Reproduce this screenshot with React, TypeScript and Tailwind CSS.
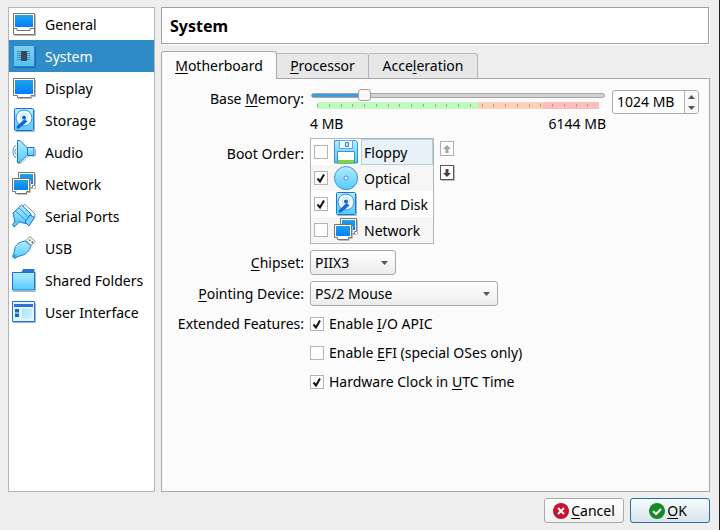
import { useState, type ReactNode } from "react";

const ICON = "block h-6 w-6 shrink-0 overflow-visible";

function Defs() {
  return (
    <svg className="absolute h-0 w-0" aria-hidden="true">
      <defs>
        <linearGradient id="screen" x1="0" y1="0" x2="0" y2="1">
          <stop offset="0" stopColor="#1ea4e0" />
          <stop offset="1" stopColor="#057cff" />
        </linearGradient>
        <linearGradient id="sky" x1="0" y1="0" x2="0" y2="1">
          <stop offset="0" stopColor="#b4ecff" />
          <stop offset="1" stopColor="#52ccfb" />
        </linearGradient>
        <linearGradient id="chip" x1="0" y1="0" x2="0" y2="1">
          <stop offset="0" stopColor="#84cfe8" />
          <stop offset="1" stopColor="#4fc1f2" />
        </linearGradient>
        <linearGradient id="pale" x1="0" y1="0" x2="1" y2="1">
          <stop offset="0" stopColor="#a4e2fb" />
          <stop offset="1" stopColor="#d9f5ff" />
        </linearGradient>
      </defs>
    </svg>
  );
}

function GeneralIcon() {
  return (
    <svg className={ICON} viewBox="0 0 24 24" fill="none">
      <path d="M2.500 23.500h21v-21" stroke="#bbb" />
      <path d="M1.500 1.500h21v21h-21z" fill="#fff" stroke="#757575" />
      <path d="M3 3h18v12H3z" fill="url(#screen)" />
      <path d="M2 16.500h3v2h13v-2h4" stroke="#757575" />
    </svg>
  );
}

function SystemIcon() {
  return (
    <svg className={ICON} viewBox="0 0 24 24" fill="none">
      <path d="M2 23.500h21.500V3" stroke="#1b66ad" />
      <path d="M1.500 1.500h21v21h-21z" fill="url(#chip)" stroke="#2584d8" />
      <path d="M5 7.500h13M5 9.500h13M5 11.500h13M5 13.500h13M5 15.500h13" stroke="#4a8db5" />
      <path d="M9 7h6v10H9z" fill="#334b60" />
    </svg>
  );
}

function DisplayIcon() {
  return (
    <svg className={ICON} viewBox="0 0 24 24" fill="none">
      <path d="M6 22.500h14v-2h3.500V4" stroke="#bbb" />
      <path d="M1.500 2.500h21v17h-3.500v2H5.500v-2h-4z" fill="#fff" stroke="#757575" />
      <path d="M3 4h18v14H3z" fill="url(#screen)" />
    </svg>
  );
}

function DiskIcon() {
  return (
    <svg className={ICON} viewBox="0 0 24 24" fill="none">
      <path d="M3.500 23.500h19V2" stroke="#a8b4bf" />
      <rect x="2.500" y=".5" width="19" height="22" rx="1" fill="url(#sky)" stroke="#1b74d6" />
      <circle cx="12" cy="10" r="8" fill="#f2fbff" stroke="#3a90e4" />
      <circle cx="12" cy="9" r="3.500" fill="#fff" stroke="#a8dcf8" />
      <path d="M12.500 11l3 2.500L7 20.500c-1.500 1-3.500-1-2-2.500z" fill="#1769d2" />
      <circle cx="12" cy="9.500" r="2" fill="#155fc4" />
    </svg>
  );
}

function AudioIcon() {
  return (
    <svg className={ICON} viewBox="0 0 24 24" fill="none">
      <path d="M6 23.500h3l8-7.500h6.500V9" stroke="#bbb" />
      <path d="M5.500.5h2.500L15.500 8v7L8 22.500H5.500z" fill="url(#sky)" stroke="#1b74d6" />
      <path d="M15.500 7.500h6.500v8h-6.500z" fill="url(#sky)" stroke="#1b74d6" />
      <path d="M4 5.500C0 6 0 17 4 17.500M4.500 8.500c-2 1-2 5 0 6" stroke="#3a90e4" />
    </svg>
  );
}

function NetworkIcon() {
  return (
    <svg className={ICON} viewBox="0 0 24 24" fill="none">
      <path d="M19 16.500h4.500V2" stroke="#bbb" />
      <path d="M6.500.5h16v13h-2v2h-10v-2h-4z" fill="#fff" stroke="#757575" />
      <path d="M8 2h13v10H8z" fill="url(#screen)" />
      <path d="M5 22.500h10v-2h3.500V8" stroke="#bbb" />
      <path d="M.5 6.500h17v13h-3v2h-11v-2h-3z" fill="#fff" stroke="#757575" />
      <path d="M2 8h14v10H2z" fill="url(#screen)" />
    </svg>
  );
}

function SerialIcon() {
  return (
    <svg className={ICON} viewBox="0 0 24 24" fill="none">
      <path d="M10.500 2l2.500-1.500L23 10l-.5 4-3 2z" fill="#fff" stroke="#858585" />
      <path d="M1 9L9.500 1l9.500 9v4l-4 5.500-4-.5L9 18l-6 .5z" fill="url(#sky)" stroke="#1b74d6" />
      <path d="M3.500 7l11 10M7 4l10.500 10" stroke="#3a90e4" />
      <path d="M13 18l5-7 4.500 2.500L17 22z" fill="#72d5fc" stroke="#1b74d6" />
      <path d="M3.500 17L.5 20.500 2 23l4.500-4" fill="#57cfff" stroke="#1b74d6" />
    </svg>
  );
}

function UsbIcon() {
  return (
    <svg className={ICON} viewBox="0 0 24 24" fill="none">
      <path d="M14 4.500L18 .5l5 5-4 4z" fill="#fff" stroke="#858585" />
      <path d="M17 3.500h1.500V5H17zM19.500 5.500H21V7h-1.500z" fill="#444" />
      <path
        d="M13 5c-6 1-10 4-10.500 9 0 2-.5 3-2 6.500L2.500 22.500c3-1.500 4-2.500 7-3 5-1 8-5 9.500-10z"
        fill="url(#sky)"
        stroke="#2479d4"
      />
      <path d="M2.500 18L.5 21l1.500 1.500L5 20.500z" fill="#28a4f2" />
    </svg>
  );
}

function FolderIcon() {
  return (
    <svg className={ICON} viewBox="0 0 24 24" fill="none">
      <path d="M1 23.500h22.500V4" stroke="#a8b4bf" />
      <path d="M9 5l2-4h11.500v4z" fill="#3272d0" />
      <path d="M.5 4.500h22v17.500H.5z" fill="url(#sky)" stroke="#1b74d6" />
    </svg>
  );
}

function InterfaceIcon() {
  return (
    <svg className={ICON} viewBox="0 0 24 24" fill="none">
      <path d="M1 22.500h22.500V3" stroke="#a8b4bf" />
      <path d="M.5 1.500h22v20H.5z" fill="#dff6ff" stroke="#1b74d6" />
      <path d="M2 4h19v3H2z" fill="#3272d0" />
      <path d="M3 9h4v3.500H3zM3 13.500h4V17H3z" fill="#1566cc" />
      <path d="M10 9h10v10H10z" fill="url(#pale)" />
    </svg>
  );
}

function FloppyIcon() {
  return (
    <svg className={ICON} viewBox="0 0 24 24" fill="none">
      <path d="M.5.5h21l2 2v20.500H.5z" fill="url(#sky)" stroke="#3a8ee0" />
      <path d="M5.500.5h13v8h-13z" fill="#f2fbff" stroke="#5aa7ea" />
      <path d="M11.500 2.500h3v4h-3z" fill="#b9e8fb" stroke="#2f86dc" />
      <path d="M3.500 11.500h17V23h-17z" fill="#fff" stroke="#3a8ee0" />
      <path d="M4 20h16v3H4z" fill="#7fd62d" />
    </svg>
  );
}

function OpticalIcon() {
  return (
    <svg className={ICON} viewBox="0 0 24 24" fill="none">
      <circle cx="12.500" cy="12.500" r="11.500" fill="#bbc4cc" />
      <circle cx="12" cy="12" r="11.500" fill="url(#sky)" stroke="#4795dd" />
      <circle cx="12" cy="12" r="2" fill="#fff" stroke="#3f8fdc" />
    </svg>
  );
}

function Caret({ up = false }: { up?: boolean }) {
  return (
    <svg className="block h-1 w-[7px]" viewBox="0 0 7 4">
      <path d={up ? "M0 4L3.500 0 7 4z" : "M0 0h7L3.500 4z"} fill="#555" />
    </svg>
  );
}

function Key({ children }: { children: ReactNode }) {
  return (
    <span className="underline decoration-1 underline-offset-2 [text-decoration-skip-ink:none]">{children}</span>
  );
}

function Tick({ id, on }: { id: string; on: boolean }) {
  return (
    <span className="grid h-3.5 w-3.5 shrink-0">
      <input
        id={id}
        type="checkbox"
        defaultChecked={on}
        className="peer col-start-1 row-start-1 h-3.5 w-3.5 appearance-none border border-[#b4b4b4] bg-white"
      />
      <svg
        className="pointer-events-none invisible col-start-1 row-start-1 h-3.5 w-3.5 peer-checked:visible"
        viewBox="0 0 14 14"
        fill="none"
      >
        <path d="M3.500 7.500l2.500 3L10 3.500" stroke="#111" strokeWidth="2" />
      </svg>
    </span>
  );
}

function Combo({ id, options, width }: { id: string; options: string[]; width: string }) {
  return (
    <span className={`grid items-center ${width}`}>
      <select
        id={id}
        className="col-start-1 row-start-1 h-[25px] w-full appearance-none rounded-[3px] border border-[#a9a9a9] bg-linear-to-b from-white to-[#ececec] pr-6 pl-1 leading-5"
      >
        {options.map((o) => (
          <option key={o}>{o}</option>
        ))}
      </select>
      <span className="pointer-events-none col-start-1 row-start-1 mr-2 justify-self-end">
        <Caret />
      </span>
    </span>
  );
}

const categories = [
  { name: "General", icon: <GeneralIcon /> },
  { name: "System", icon: <SystemIcon /> },
  { name: "Display", icon: <DisplayIcon /> },
  { name: "Storage", icon: <DiskIcon /> },
  { name: "Audio", icon: <AudioIcon /> },
  { name: "Network", icon: <NetworkIcon /> },
  { name: "Serial Ports", icon: <SerialIcon /> },
  { name: "USB", icon: <UsbIcon /> },
  { name: "Shared Folders", icon: <FolderIcon /> },
  { name: "User Interface", icon: <InterfaceIcon /> },
];

const bootDevices = [
  { name: "Floppy", icon: <FloppyIcon />, on: false },
  { name: "Optical", icon: <OpticalIcon />, on: true },
  { name: "Hard Disk", icon: <DiskIcon />, on: true },
  { name: "Network", icon: <NetworkIcon />, on: false },
];

const MIN = 4;
const MAX = 6144;

function MemoryRow() {
  const [memory, setMemory] = useState(1024);
  const fill = ((memory - MIN) / (MAX - MIN)) * 100;
  const step = (by: number) => setMemory((m) => Math.min(MAX, Math.max(MIN, m + by)));
  return (
    <div className="flex items-start gap-1.5">
      <div className="min-w-0 flex-1">
        <div className="mx-px grid h-3 items-center">
          <div className="col-start-1 row-start-1 h-[5px] overflow-hidden rounded-sm border border-[#a5a5a5] bg-[#d2d2d2]">
            <div className="h-full bg-[#3d9be0] shadow-[0_0_0_1px_#2b6f9f]" style={{ width: `${fill}%` }} />
          </div>
          <input
            id="memory"
            type="range"
            min={MIN}
            max={MAX}
            value={memory}
            onChange={(e) => setMemory(Number(e.target.value))}
            className="col-start-1 row-start-1 h-3 w-full appearance-none bg-transparent [&::-webkit-slider-thumb]:h-3 [&::-webkit-slider-thumb]:w-[13px] [&::-webkit-slider-thumb]:appearance-none [&::-webkit-slider-thumb]:rounded-[3px] [&::-webkit-slider-thumb]:border [&::-webkit-slider-thumb]:border-[#a0a0a0] [&::-webkit-slider-thumb]:bg-[#f8f8f8]"
          />
        </div>
        <div className="mx-[7px] mt-px flex h-[7px] items-center bg-[linear-gradient(90deg,#c0fbbd_57%,#fdd0b8_57%,#fdd0b8_80%,#fcbdbd_80%)]">
          {Array.from({ length: 24 }, (_, i) => (
            <span key={i} className="h-[3px] flex-1 border-l border-[#a3a3a3]" />
          ))}
        </div>
        <div className="mt-1.5 flex justify-between leading-[17px]">
          <span>4 MB</span>
          <span>6144 MB</span>
        </div>
      </div>
      <div className="mt-px flex h-6 w-[87px] overflow-hidden rounded-[3px] border border-[#a9a9a9] bg-white">
        <input
          aria-label="Base memory size"
          value={`${memory} MB`}
          onChange={(e) => setMemory(parseInt(e.target.value, 10) || MIN)}
          className="w-0 min-w-0 flex-1 pl-1 outline-none"
        />
        <div className="flex w-[14px] flex-col border-l border-[#b4b4b4] bg-[#f8f8f8]">
          <button aria-label="More memory" onClick={() => step(4)} className="grid flex-1 place-items-center">
            <Caret up />
          </button>
          <button aria-label="Less memory" onClick={() => step(-4)} className="grid flex-1 place-items-center">
            <Caret />
          </button>
        </div>
      </div>
    </div>
  );
}

function ArrowButton({ up = false }: { up?: boolean }) {
  return (
    <button
      aria-label={up ? "Move up" : "Move down"}
      disabled={up}
      className="grid h-[15px] w-3.5 place-items-center border border-[#555] bg-white shadow-[1px_1px_0_#bbb] disabled:border-[#b0b0b0] disabled:shadow-none"
    >
      <svg className="block h-2 w-2" viewBox="0 0 8 8">
        <path
          d={up ? "M4 0L8 4H5.500v4h-3V4H0z" : "M4 8L0 4h2.500V0h3v4H8z"}
          fill={up ? "#a3a3a3" : "#4a3f3f"}
        />
      </svg>
    </button>
  );
}

function BootOrder() {
  return (
    <div className="flex items-start gap-1.5">
      <ul aria-labelledby="boot-label" className="w-[124px] border border-[#b4b4b4] bg-white">
        {bootDevices.map((d, i) => (
          <li key={d.name} className="flex h-[26px] items-center pl-[3px] even:bg-[#f6f6f6]">
            <Tick id={`boot-${i}`} on={d.on} />
            <label htmlFor={`boot-${i}`} className="ml-1.5 flex flex-1 items-center gap-[3px] self-stretch">
              {d.icon}
              <span
                className={`flex flex-1 items-center self-stretch border pt-0.5 pl-0.5 whitespace-nowrap ${
                  i === 0 ? "border-[#b3cfe2] bg-[#e6f1f8]" : "border-transparent"
                }`}
              >
                {d.name}
              </span>
            </label>
          </li>
        ))}
      </ul>
      <div className="mt-[3px] flex flex-col gap-[9px]">
        <ArrowButton up />
        <ArrowButton />
      </div>
    </div>
  );
}

const tabClass =
  "h-[26px] self-end border border-l-0 border-t-[#bcbcbc] border-r-[#b4b4b4] border-b-[#a9a9a9] bg-[#e7e7e7] rounded-tr-[3px]";

export default function App() {
  return (
    <div className="flex min-h-screen flex-col gap-1.5 border-r border-[#1c1c1c] bg-[#eee] py-[7px] pr-[9px] pl-2 font-['Noto_Sans','Open_Sans',sans-serif] text-sm leading-5 text-black">
      <Defs />
      <div className="flex flex-1 gap-1.5">
        <nav className="w-[147px] shrink-0 border border-[#b4b4b4] bg-white">
          {categories.map((c) => (
            <button
              key={c.name}
              aria-current={c.name === "System" ? "page" : undefined}
              className="flex h-8 w-full items-center gap-[9px] pl-[3px] text-left whitespace-nowrap aria-[current=page]:bg-[#308cc6] aria-[current=page]:text-white"
            >
              {c.icon}
              <span className="pt-0.5">{c.name}</span>
            </button>
          ))}
        </nav>
        <main className="flex min-w-0 flex-1 flex-col">
          <h1 className="mr-px flex h-[37px] items-center border border-[#a0a0a0] bg-white px-2 text-base font-bold shadow-[1px_1px_0_#fff]">
            System
          </h1>
          <div role="tablist" className="relative mt-[7px] flex">
            <button
              role="tab"
              aria-selected="true"
              className="h-7 w-[116px] rounded-t-[3px] border border-b-0 border-[#a9a9a9] bg-[#fbfbfb]"
            >
              <Key>M</Key>otherboard
            </button>
            <button role="tab" className={`${tabClass} w-[92px]`}>
              <Key>P</Key>rocessor
            </button>
            <button role="tab" className={`${tabClass} w-[109px]`}>
              Acce<Key>l</Key>eration
            </button>
          </div>
          <section className="-mt-px flex-1 border border-[#a9a9a9] bg-[#fbfbfb] p-2.5">
            <div className="grid grid-cols-[132px_minmax(0,1fr)] gap-1.5">
              <label htmlFor="memory" className="justify-self-end">
                Base <Key>M</Key>emory:
              </label>
              <MemoryRow />
              <span id="boot-label" className="mt-1.5 justify-self-end">
                Boot Order:
              </span>
              <BootOrder />
              <label htmlFor="chipset" className="self-center justify-self-end">
                <Key>C</Key>hipset:
              </label>
              <Combo id="chipset" options={["PIIX3", "ICH9"]} width="w-[86px]" />
              <label htmlFor="pointer" className="self-center justify-self-end">
                <Key>P</Key>ointing Device:
              </label>
              <Combo id="pointer" options={["PS/2 Mouse", "USB Tablet"]} width="w-[188px]" />
              <span className="mt-0.5 justify-self-end whitespace-nowrap">Extended Features:</span>
              <div className="flex flex-col gap-1.5">
                <label htmlFor="apic" className="flex h-[23px] items-center gap-[5px]">
                  <Tick id="apic" on />
                  <span>
                    Enable <Key>I</Key>/O APIC
                  </span>
                </label>
                <label htmlFor="efi" className="flex h-[23px] items-center gap-[5px]">
                  <Tick id="efi" on={false} />
                  <span>
                    Enable <Key>E</Key>FI (special OSes only)
                  </span>
                </label>
                <label htmlFor="utc" className="flex h-[23px] items-center gap-[5px]">
                  <Tick id="utc" on />
                  <span>
                    Hardware Clock in <Key>U</Key>TC Time
                  </span>
                </label>
              </div>
            </div>
          </section>
        </main>
      </div>
      <footer className="flex justify-end gap-1.5">
        <button className="flex h-[25px] w-20 items-center justify-center gap-0.5 rounded-[3px] border border-[#a9a9a9] bg-linear-to-b from-white to-[#f0f0f0]">
          <svg className="h-4 w-4" viewBox="0 0 16 16" fill="none">
            <circle cx="8" cy="8" r="8" fill="#c5132f" />
            <path d="M5 5l6 6M11 5l-6 6" stroke="#fff" strokeWidth="2" />
          </svg>
          <span>
            <Key>C</Key>ancel
          </span>
        </button>
        <button className="flex h-[25px] w-20 items-center justify-center gap-0.5 rounded-[3px] border border-[#276f9f] bg-linear-to-b from-[#f8fafb] to-[#d9e4ec] pr-1">
          <svg className="h-4 w-4" viewBox="0 0 16 16" fill="none">
            <circle cx="8" cy="8" r="8" fill="#138a26" />
            <path d="M4 8l3 3 5-5" stroke="#fff" strokeWidth="2" />
          </svg>
          <span>
            <Key>O</Key>K
          </span>
        </button>
      </footer>
    </div>
  );
}
